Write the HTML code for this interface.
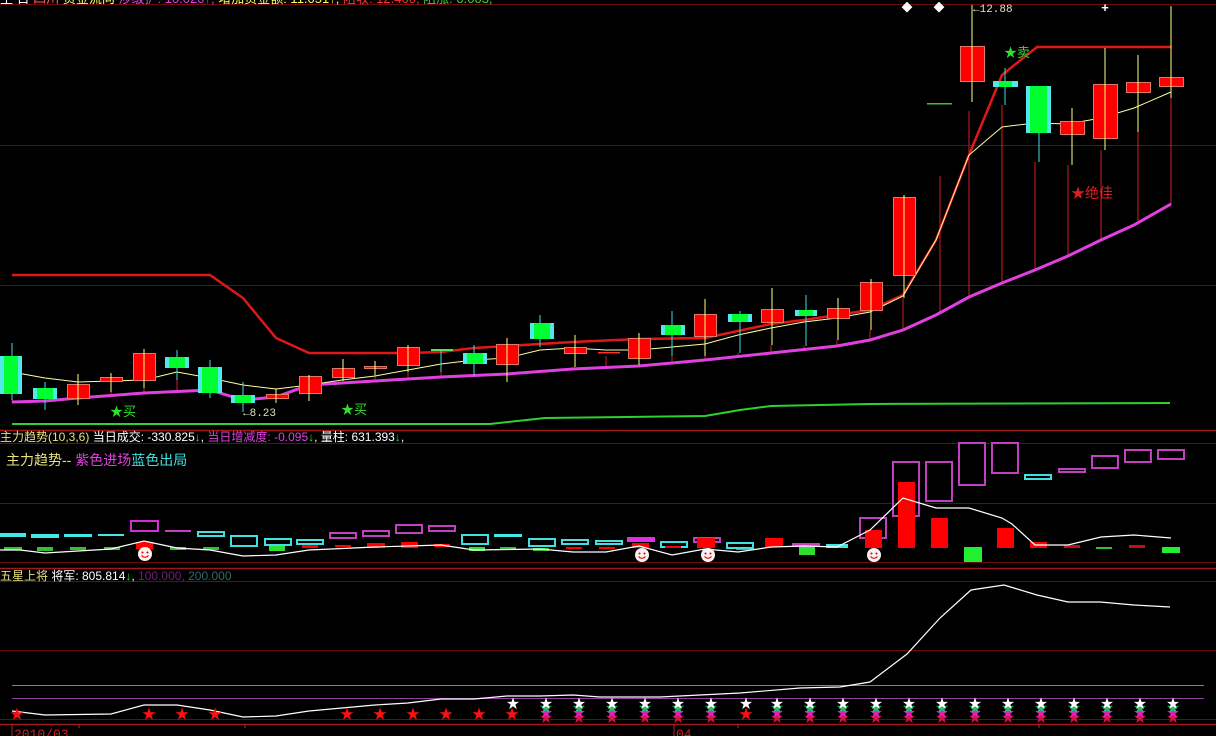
<!DOCTYPE html>
<html><head><meta charset="utf-8"><style>
html,body{margin:0;padding:0;background:#000;width:1216px;height:736px;overflow:hidden}
svg{display:block}
text{font-family:"Liberation Sans","Noto Sans CJK SC","WenQuanYi Zen Hei",sans-serif}
.m{font-family:"Liberation Mono","Noto Sans CJK SC",monospace}
</style></head><body>
<svg width="1216" height="736" viewBox="0 0 1216 736" xmlns="http://www.w3.org/2000/svg">
<rect width="1216" height="736" fill="#000"/>
<g stroke="#6a0c0c" stroke-width="1">
<line x1="0" y1="4.5" x2="1216" y2="4.5"/>
<line x1="0" y1="145.5" x2="1216" y2="145.5"/>
<line x1="0" y1="285.5" x2="1216" y2="285.5"/>
<line x1="0" y1="443.5" x2="1216" y2="443.5"/>
<line x1="0" y1="503.5" x2="1216" y2="503.5"/>
<line x1="0" y1="562.5" x2="1216" y2="562.5"/>
<line x1="0" y1="581.5" x2="1216" y2="581.5"/>
<line x1="0" y1="650.5" x2="1216" y2="650.5"/>
<line x1="0" y1="719.5" x2="1216" y2="719.5"/>
</g>
<g stroke="#a01818" stroke-width="1.5">
<line x1="0" y1="430.5" x2="1216" y2="430.5"/>
<line x1="0" y1="568.5" x2="1216" y2="568.5"/>
<line x1="0" y1="724.5" x2="1216" y2="724.5"/>
</g>
<text x="0" y="3" font-size="13"><tspan fill="#fff">主 日</tspan><tspan fill="#ff6060"> 四川 </tspan><tspan fill="#ffff60">资金流向 </tspan><tspan fill="#e040e0">涉级扩: 10.020↑, </tspan><tspan fill="#ffff60">增加资金额: 11.051↑, </tspan><tspan fill="#ff3030">阻收: 12.400, </tspan><tspan fill="#40d040">阻涨: 0.003,</tspan></text>

<polyline fill="none" stroke="#30d030" stroke-width="2" points="12,424 490,424 545,418 705,416 740,410 771,406 870,404 1170,403"/>

<g stroke="#d02020" stroke-width="1">
<line x1="12" y1="400" x2="12" y2="402"/><line x1="78" y1="405" x2="78" y2="398"/>
<line x1="111" y1="392" x2="111" y2="396"/><line x1="144" y1="388" x2="144" y2="393"/>
<line x1="177" y1="380" x2="177" y2="392"/><line x1="276" y1="403" x2="276" y2="397"/>
<line x1="309" y1="401" x2="309" y2="385"/><line x1="375" y1="375" x2="375" y2="381"/>
<line x1="408" y1="372" x2="408" y2="379"/><line x1="441" y1="372" x2="441" y2="377"/>
<line x1="507" y1="382" x2="507" y2="374"/><line x1="573" y1="367" x2="573" y2="369"/>
<line x1="606" y1="356" x2="606" y2="368"/><line x1="639" y1="365" x2="639" y2="366"/>
<line x1="672" y1="356" x2="672" y2="363"/><line x1="705" y1="356" x2="705" y2="360"/>
<line x1="738" y1="353" x2="738" y2="357"/><line x1="771" y1="345" x2="771" y2="353"/>
<line x1="804" y1="346" x2="804" y2="350"/><line x1="837" y1="340" x2="837" y2="346"/>
<line x1="870" y1="330" x2="870" y2="340"/><line x1="903" y1="298" x2="903" y2="330"/>
<line x1="940" y1="176" x2="940" y2="313"/><line x1="969" y1="111" x2="969" y2="297"/>
<line x1="1002" y1="105" x2="1002" y2="283"/><line x1="1035" y1="162" x2="1035" y2="270"/>
<line x1="1068" y1="165" x2="1068" y2="256"/><line x1="1101" y1="150" x2="1101" y2="240"/>
<line x1="1138" y1="132" x2="1138" y2="225"/><line x1="1171" y1="98" x2="1171" y2="204"/>
</g>

<polyline fill="none" stroke="#e040e0" stroke-width="3" points="12,402 45,401 78,398 144,393 210,390 243,400 276,397 309,385 375,381 441,377 507,374 573,369 639,366 705,360 771,353 837,346 870,340 903,330 936,315 969,297 1002,283 1035,270 1068,256 1101,240 1134,225 1171,204"/>
<polyline fill="none" stroke="#e01818" stroke-width="2.5" points="12,275 210,275 243,298 276,338 309,353 408,353 441,352 474,348 507,346 573,342 639,339 705,338 771,324 804,320 870,310 903,295 936,240 969,155 1002,75 1037,47 1171,47"/>
<polyline fill="none" stroke="#ffffa0" stroke-width="1" points="12,372 45,378 78,382 111,381 144,380 177,372 210,378 243,385 276,389 309,385 342,380 375,376 408,370 441,364 474,360 507,358 540,350 573,348 606,350 639,350 672,347 705,344 738,335 771,328 804,322 837,318 870,312 903,296 936,240 969,155 1002,127 1035,123 1068,124 1101,118 1134,108 1171,92"/>

<g>
<line x1="12" y1="343" x2="12" y2="400" stroke="#40e0e0"/><rect x="0" y="356" width="22" height="38" fill="#50e8e8"/><rect x="4" y="356" width="14" height="38" fill="#00ff30"/>
<line x1="45" y1="382" x2="45" y2="410" stroke="#40e0e0"/><rect x="33" y="388" width="24" height="11" fill="#50e8e8"/><rect x="37" y="388" width="16" height="11" fill="#00ff30"/>
<line x1="177" y1="350" x2="177" y2="380" stroke="#40e0e0"/><rect x="165" y="357" width="24" height="11" fill="#50e8e8"/><rect x="169" y="357" width="16" height="11" fill="#00ff30"/>
<line x1="210" y1="360" x2="210" y2="398" stroke="#40e0e0"/><rect x="198" y="367" width="24" height="26" fill="#50e8e8"/><rect x="202" y="367" width="16" height="26" fill="#00ff30"/>
<line x1="243" y1="382" x2="243" y2="412" stroke="#40e0e0"/><rect x="231" y="395" width="24" height="8" fill="#50e8e8"/><rect x="235" y="395" width="16" height="8" fill="#00ff30"/>
<line x1="441" y1="350" x2="441" y2="372" stroke="#40e0e0"/><rect x="431" y="349" width="22" height="2" fill="#60e060"/>
<line x1="474" y1="345" x2="474" y2="376" stroke="#40e0e0"/><rect x="463" y="353" width="24" height="11" fill="#50e8e8"/><rect x="467" y="353" width="16" height="11" fill="#00ff30"/>
<line x1="540" y1="315" x2="540" y2="347" stroke="#40e0e0"/><rect x="530" y="323" width="24" height="16" fill="#50e8e8"/><rect x="534" y="323" width="16" height="16" fill="#00ff30"/>
<line x1="672" y1="311" x2="672" y2="356" stroke="#40e0e0"/><rect x="661" y="325" width="24" height="10" fill="#50e8e8"/><rect x="665" y="325" width="16" height="10" fill="#00ff30"/>
<line x1="740" y1="311" x2="740" y2="353" stroke="#40e0e0"/><rect x="728" y="314" width="24" height="8" fill="#50e8e8"/><rect x="732" y="314" width="16" height="8" fill="#00ff30"/>
<line x1="806" y1="295" x2="806" y2="346" stroke="#40e0e0"/><rect x="795" y="310" width="22" height="6" fill="#50e8e8"/><rect x="799" y="310" width="14" height="6" fill="#00ff30"/>
<rect x="927" y="103" width="25" height="1.5" fill="#40c040"/>
<line x1="1005" y1="68" x2="1005" y2="105" stroke="#40e0e0"/><rect x="993" y="81" width="25" height="6" fill="#50e8e8"/><rect x="999" y="81" width="13" height="6" fill="#00ff30"/>
<line x1="1039" y1="86" x2="1039" y2="162" stroke="#40e0e0"/><rect x="1026" y="86" width="25" height="47" fill="#50e8e8"/><rect x="1030" y="86" width="17" height="47" fill="#00ff30"/>
</g>
<g stroke="#e07868" stroke-width="1">
<rect x="67.5" y="384.5" width="22" height="14" fill="#ff0000"/>
<rect x="100.5" y="377.5" width="22" height="4" fill="#ff0000"/>
<rect x="133.5" y="353.5" width="22" height="27" fill="#ff0000"/>
<rect x="266.5" y="394.5" width="22" height="4" fill="#ff0000"/>
<rect x="299.5" y="376.5" width="22" height="17" fill="#ff0000"/>
<rect x="332.5" y="368.5" width="22" height="9" fill="#ff0000"/>
<rect x="364.5" y="366.5" width="22" height="2" fill="#ff0000"/>
<rect x="397.5" y="347.5" width="22" height="18" fill="#ff0000"/>
<rect x="496.5" y="344.5" width="22" height="20" fill="#ff0000"/>
<rect x="564.5" y="347.5" width="22" height="6" fill="#ff0000"/>
<rect x="628.5" y="338.5" width="22" height="20" fill="#ff0000"/>
<rect x="694.5" y="314.5" width="22" height="22" fill="#ff0000"/>
<rect x="761.5" y="309.5" width="22" height="13" fill="#ff0000"/>
<rect x="827.5" y="308.5" width="22" height="10" fill="#ff0000"/>
<rect x="860.5" y="282.5" width="22" height="28" fill="#ff0000"/>
<rect x="893.5" y="197.5" width="22" height="78" fill="#ff0000"/>
<rect x="960.5" y="46.5" width="24" height="35" fill="#ff0000"/>
<rect x="1060.5" y="121.5" width="24" height="13" fill="#ff0000"/>
<rect x="1093.5" y="84.5" width="24" height="54" fill="#ff0000"/>
<rect x="1126.5" y="82.5" width="24" height="10" fill="#ff0000"/>
<rect x="1159.5" y="77.5" width="24" height="9" fill="#ff0000"/>
</g>
<rect x="598" y="352" width="22" height="1.5" fill="#ff3030"/>
<g stroke="#ffff80" stroke-width="1">
<line x1="78" y1="374" x2="78" y2="405"/><line x1="111" y1="373" x2="111" y2="392"/>
<line x1="144" y1="349" x2="144" y2="388"/><line x1="276" y1="389" x2="276" y2="403"/>
<line x1="309" y1="375" x2="309" y2="401"/><line x1="343" y1="359" x2="343" y2="381"/>
<line x1="375" y1="361" x2="375" y2="375"/><line x1="408" y1="345" x2="408" y2="372"/>
<line x1="507" y1="338" x2="507" y2="382"/><line x1="575" y1="335" x2="575" y2="367"/>
<line x1="639" y1="333" x2="639" y2="365"/><line x1="705" y1="299" x2="705" y2="356"/>
<line x1="772" y1="288" x2="772" y2="345"/><line x1="838" y1="298" x2="838" y2="340"/>
<line x1="871" y1="279" x2="871" y2="330"/><line x1="904" y1="195" x2="904" y2="298"/>
<line x1="972" y1="5" x2="972" y2="102"/><line x1="1072" y1="108" x2="1072" y2="165"/>
<line x1="1105" y1="48" x2="1105" y2="150"/><line x1="1138" y1="55" x2="1138" y2="132"/>
<line x1="1171" y1="6" x2="1171" y2="98"/>
</g>
<text x="110" y="416" font-size="13" fill="#30e030">★买</text>
<text x="341" y="414" font-size="13" fill="#30e030">★买</text>
<text x="243" y="416" font-size="11" fill="#e0e0c0" class="m">←8.23</text>
<text x="1004" y="57" font-size="13" fill="#30e030">★卖</text>
<text x="1071" y="198" font-size="14" fill="#e02020">★绝佳</text>
<text x="973" y="12" font-size="11" fill="#e0e0c0" class="m">←12.88</text>
<text x="907" y="11" font-size="11" fill="#fff" text-anchor="middle">◆</text>
<text x="939" y="11" font-size="11" fill="#fff" text-anchor="middle">◆</text>
<text x="1105" y="12" font-size="13" fill="#fff" text-anchor="middle" font-weight="bold">+</text>

<text x="0" y="441" font-size="12"><tspan fill="#e8e080">主力趋势(10,3,6) </tspan><tspan fill="#fff">当日成交: -330.825</tspan><tspan fill="#30e030">↓</tspan><tspan fill="#fff">, </tspan><tspan fill="#e040e0">当日增减度: -0.095</tspan><tspan fill="#30e030">↓</tspan><tspan fill="#fff">, 量柱: 631.393</tspan><tspan fill="#30e030">↓</tspan><tspan fill="#fff">,</tspan></text>
<text x="6" y="465" font-size="14"><tspan fill="#e8e080">主力趋势-- </tspan><tspan fill="#e040e0">紫色进场</tspan><tspan fill="#40e0e0">蓝色出局</tspan></text>

<g>
<rect x="0" y="533" width="26" height="4" fill="#40e8e8"/><rect x="4" y="547" width="18" height="3" fill="#30c030"/>
<rect x="31" y="534" width="28" height="4" fill="#40e8e8"/><rect x="37" y="547" width="16" height="4" fill="#30c030"/>
<rect x="64" y="534" width="28" height="3" fill="#40e8e8"/><rect x="70" y="547" width="16" height="3" fill="#30c030"/>
<rect x="98" y="534" width="26" height="2" fill="#40e8e8"/><rect x="104" y="547" width="16" height="3" fill="#30c030"/>
<rect x="165" y="530" width="26" height="2" fill="#c040c0"/><rect x="170" y="547" width="16" height="3" fill="#30c030"/>
<rect x="203" y="547" width="16" height="3" fill="#30c030"/>
<rect x="269" y="546" width="16" height="5" fill="#30e030"/>
<rect x="469" y="547" width="16" height="4" fill="#30e030"/>
<rect x="494" y="534" width="28" height="3" fill="#40e8e8"/><rect x="500" y="547" width="16" height="3" fill="#30c030"/>
<rect x="533" y="548" width="16" height="3" fill="#30c030"/>
<rect x="627" y="537" width="28" height="5" fill="#e030e0"/>
<rect x="736" y="547" width="16" height="3" fill="#30c030"/>
<rect x="799" y="547" width="16" height="8" fill="#30e030"/>
<rect x="826" y="544" width="22" height="4" fill="#40e8e8"/>
<rect x="964" y="547" width="18" height="15" fill="#20f030"/>
<rect x="1096" y="547" width="16" height="2" fill="#30c030"/>
<rect x="1162" y="547" width="18" height="6" fill="#20f030"/>
</g>
<g fill="none" stroke-width="2">
<rect x="131" y="521" width="27" height="10" stroke="#d030d0"/>
<rect x="198" y="532" width="26" height="4" stroke="#40e0e0"/>
<rect x="231" y="536" width="26" height="10" stroke="#40e0e0"/>
<rect x="265" y="539" width="26" height="6" stroke="#40e0e0"/>
<rect x="297" y="540" width="26" height="4" stroke="#40e0e0"/>
<rect x="330" y="533" width="26" height="5" stroke="#c040c0"/>
<rect x="363" y="531" width="26" height="5" stroke="#c040c0"/>
<rect x="396" y="525" width="26" height="8" stroke="#c040c0"/>
<rect x="429" y="526" width="26" height="5" stroke="#c040c0"/>
<rect x="462" y="535" width="26" height="9" stroke="#40e0e0"/>
<rect x="529" y="539" width="26" height="7" stroke="#40e0e0"/>
<rect x="562" y="540" width="26" height="4" stroke="#40e0e0"/>
<rect x="596" y="541" width="26" height="3" stroke="#40e0e0"/>
<rect x="661" y="542" width="26" height="5" stroke="#40e0e0"/>
<rect x="694" y="538" width="26" height="4" stroke="#c040c0"/>
<rect x="727" y="543" width="26" height="5" stroke="#40e0e0"/>
<rect x="793" y="544" width="26" height="2" stroke="#c040c0"/>
<rect x="860" y="518" width="26" height="20" stroke="#c040c0"/>
<rect x="893" y="462" width="26" height="54" stroke="#c040c0"/>
<rect x="926" y="462" width="26" height="39" stroke="#c040c0"/>
<rect x="959" y="443" width="26" height="42" stroke="#c040c0"/>
<rect x="992" y="443" width="26" height="30" stroke="#c040c0"/>
<rect x="1025" y="475" width="26" height="4" stroke="#40e0e0"/>
<rect x="1059" y="469" width="26" height="3" stroke="#c040c0"/>
<rect x="1092" y="456" width="26" height="12" stroke="#c040c0"/>
<rect x="1125" y="450" width="26" height="12" stroke="#c040c0"/>
<rect x="1158" y="450" width="26" height="9" stroke="#c040c0"/>
</g>
<g fill="#ff0000">
<rect x="136" y="542" width="17" height="7"/>
<rect x="302" y="545" width="16" height="3"/>
<rect x="335" y="545" width="16" height="2"/>
<rect x="367" y="543" width="18" height="5"/>
<rect x="401" y="542" width="17" height="6"/>
<rect x="434" y="544" width="16" height="3"/>
<rect x="566" y="547" width="16" height="2"/>
<rect x="599" y="547" width="16" height="2"/>
<rect x="632" y="543" width="17" height="5"/>
<rect x="665" y="546" width="16" height="2"/>
<rect x="697" y="538" width="18" height="10"/>
<rect x="765" y="538" width="18" height="9"/>
<rect x="865" y="530" width="17" height="18"/>
<rect x="898" y="482" width="17" height="66"/>
<rect x="931" y="518" width="17" height="30"/>
<rect x="997" y="528" width="17" height="20"/>
<rect x="1030" y="542" width="17" height="6"/>
<rect x="1064" y="545" width="16" height="3" fill="#c01010"/>
<rect x="1129" y="545" width="16" height="3" fill="#c01010"/>
</g>
<polyline fill="none" stroke="#fff" stroke-width="1.2" points="0,550 20,550 45,553 111,549 144,541 177,548 210,550 243,556 276,555 309,550 375,547 441,545 474,550 540,549 573,552 606,552 639,546 672,555 705,549 738,552 771,547 804,546 837,547 870,530 903,498 936,508 969,508 1002,518 1012,524 1035,545 1068,545 1101,537 1134,535 1171,538"/>
<g>
<g transform="translate(145,554)"><circle r="7" fill="#fff0f0"/><circle cx="-2.5" cy="-1.5" r="1" fill="#c00"/><circle cx="2.5" cy="-1.5" r="1" fill="#c00"/><path d="M-3.5,1.5 Q0,5 3.5,1.5" stroke="#c00" fill="none"/></g>
<g transform="translate(642,555)"><circle r="7" fill="#fff0f0"/><circle cx="-2.5" cy="-1.5" r="1" fill="#c00"/><circle cx="2.5" cy="-1.5" r="1" fill="#c00"/><path d="M-3.5,1.5 Q0,5 3.5,1.5" stroke="#c00" fill="none"/></g>
<g transform="translate(708,555)"><circle r="7" fill="#fff0f0"/><circle cx="-2.5" cy="-1.5" r="1" fill="#c00"/><circle cx="2.5" cy="-1.5" r="1" fill="#c00"/><path d="M-3.5,1.5 Q0,5 3.5,1.5" stroke="#c00" fill="none"/></g>
<g transform="translate(874,555)"><circle r="7" fill="#fff0f0"/><circle cx="-2.5" cy="-1.5" r="1" fill="#c00"/><circle cx="2.5" cy="-1.5" r="1" fill="#c00"/><path d="M-3.5,1.5 Q0,5 3.5,1.5" stroke="#c00" fill="none"/></g>
</g>

<text x="0" y="580" font-size="12"><tspan fill="#e8e080">五星上将 </tspan><tspan fill="#fff">将军: 805.814</tspan><tspan fill="#30e030">↓</tspan><tspan fill="#fff">, </tspan><tspan fill="#702070">100.000</tspan><tspan fill="#404040">, </tspan><tspan fill="#306868">200.000</tspan></text>
<line x1="12" y1="685.5" x2="1204" y2="685.5" stroke="#40a0a0"/>
<line x1="12" y1="698.5" x2="1204" y2="698.5" stroke="#9040a0"/>
<polyline fill="none" stroke="#fff" stroke-width="1.2" points="12,711 45,715 111,714 144,705 177,705 210,710 243,717 276,716 309,711 342,708 375,705 408,703 441,699 474,699 507,696 540,696 573,695 600,697 660,697 700,695 740,693 800,688 840,687 870,682 907,654 940,618 971,590 1004,585 1037,595 1068,602 1100,602 1134,605 1170,607"/>
<g font-size="14" text-anchor="middle" fill="#ff1010">
<text x="17" y="719">★</text><text x="149" y="719">★</text><text x="182" y="719">★</text><text x="215" y="719">★</text><text x="347" y="719">★</text><text x="380" y="719">★</text><text x="413" y="719">★</text><text x="446" y="719">★</text><text x="479" y="719">★</text><text x="512" y="719">★</text><text x="746" y="719">★</text>
</g>
<g font-size="13" text-anchor="middle">
<g id="s1"><text x="546" y="722" fill="#e01040">★</text><text x="546" y="717" fill="#e020c0">★</text><text x="546" y="712" fill="#20c060">★</text><text x="546" y="708" fill="#fff">★</text></g>
<use href="#s1" x="33"/><use href="#s1" x="66"/><use href="#s1" x="99"/><use href="#s1" x="132"/><use href="#s1" x="165"/>
<use href="#s1" x="231"/><use href="#s1" x="264"/><use href="#s1" x="297"/><use href="#s1" x="330"/><use href="#s1" x="363"/><use href="#s1" x="396"/><use href="#s1" x="429"/><use href="#s1" x="462"/><use href="#s1" x="495"/><use href="#s1" x="528"/><use href="#s1" x="561"/><use href="#s1" x="594"/><use href="#s1" x="627"/>
<text x="746" y="708" fill="#fff">★</text>
<text x="513" y="708" fill="#fff">★</text>
</g>
<g stroke="#c02020"><line x1="12" y1="724" x2="12" y2="736"/><line x1="79" y1="724" x2="79" y2="728"/><line x1="245" y1="724" x2="245" y2="728"/><line x1="674" y1="724" x2="674" y2="736"/><line x1="738" y1="724" x2="738" y2="728"/><line x1="1039" y1="724" x2="1039" y2="728"/></g>
<text x="14" y="738" font-size="13" fill="#d02020" class="m">2010/03</text>
<text x="676" y="738" font-size="13" fill="#d02020" class="m">04</text>
</svg>
</body></html>
